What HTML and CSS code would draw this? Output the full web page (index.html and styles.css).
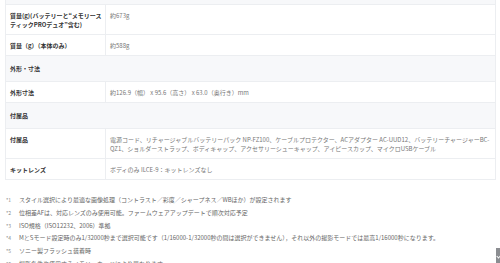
FILE: index.html
```html
<!DOCTYPE html>
<html lang="ja">
<head>
<meta charset="utf-8">
<link rel="stylesheet" href="styles.css">
</head>
<body>
<div class="page">
  <table class="spec">
    <colgroup><col class="c-label"><col class="c-value"></colgroup>
    <tr class="cut"><td colspan="2"></td></tr>
    <tr><th>質量(g)(バッテリーと“メモリースティックPROデュオ”含む)</th><td>約673g</td></tr>
    <tr><th>質量（g）（本体のみ）</th><td>約588g</td></tr>
    <tr class="group"><th colspan="2">外形・寸法</th></tr>
    <tr><th>外形寸法</th><td>約126.9（幅） x 95.6（高さ） x 63.0（奥行き）mm</td></tr>
    <tr class="group"><th colspan="2">付属品</th></tr>
    <tr><th>付属品</th><td>電源コード、リチャージャブルバッテリーパック NP-FZ100、ケーブルプロテクター、ACアダプター AC-UUD12、バッテリーチャージャーBC-QZ1、ショルダーストラップ、ボディキャップ、アクセサリーシューキャップ、アイピースカップ、マイクロUSBケーブル</td></tr>
    <tr><th>キットレンズ</th><td>ボディのみ ILCE-9：キットレンズなし</td></tr>
  </table>
  <ul class="notes">
    <li><span class="mark">*1</span><span>スタイル選択により最適な画像処理（コントラスト／彩度／シャープネス／WBほか）が設定されます</span></li>
    <li><span class="mark">*2</span><span>位相差AFは、対応レンズのみ使用可能。ファームウェアアップデートで順次対応予定</span></li>
    <li><span class="mark">*3</span><span>ISO規格（ISO12232、2006）準拠</span></li>
    <li><span class="mark">*4</span><span>MとSモード設定時のみ1/32000秒まで選択可能です（1/16000-1/32000秒の間は選択ができません），それ以外の撮影モードでは最高1/16000秒になります。</span></li>
    <li><span class="mark">*5</span><span>ソニー製フラッシュ装着時</span></li>
    <li><span class="mark">*6</span><span>撮影条件や使用するメモリーカードにより異なります。</span></li>
  </ul>
</div>
<a class="totop" href="#"><span class="chev"></span></a>
</body>
</html>
```
FILE: styles.css
```css
html, body {
  margin: 0;
  padding: 0;
  background: #fff;
}
body {
  font-family: "Noto Sans CJK JP", "Noto Sans", sans-serif;
  font-size: 6px;
  line-height: 9px;
  color: #777;
  overflow: hidden;
}
.page {
  padding: 0 4px 0 5px;
}
.spec {
  width: 491px;
  border-collapse: collapse;
  table-layout: fixed;
}
.c-label {
  width: 100px;
}
.spec th,
.spec td {
  border: 1px solid #eceef1;
  padding: 6px 2px 5px 4px;
  text-align: left;
  vertical-align: top;
}
.spec th {
  color: #333;
  font-weight: 700;
}
.spec td {
  color: #777;
  font-weight: 400;
}
.spec .cut td {
  height: 4px;
  padding: 0;
  background: #f7f8fa;
  border-top: 0;
}
.spec .group th {
  background: #f7f8fa;
  padding: 8px 4px 8px 4px;
}
.notes {
  list-style: none;
  margin: 13px 0 0 0;
  padding: 0;
  color: #666;
}
.notes li {
  display: flex;
  line-height: 9px;
  padding: 2px 0 1.8px;
}
.notes .mark {
  width: 13px;
  flex: none;
  padding-left: 1px;
  font-size: 5px;
  color: #888;
}
.totop {
  position: fixed;
  right: -20px;
  top: 248px;
  width: 24px;
  height: 24px;
  background: #8b8d91;
  display: block;
}
.chev {
  position: absolute;
  left: 1px;
  top: 7px;
  width: 2px;
  height: 2px;
  border-right: 1px solid #fff;
  border-bottom: 1px solid #fff;
  transform: rotate(45deg);
}
```
